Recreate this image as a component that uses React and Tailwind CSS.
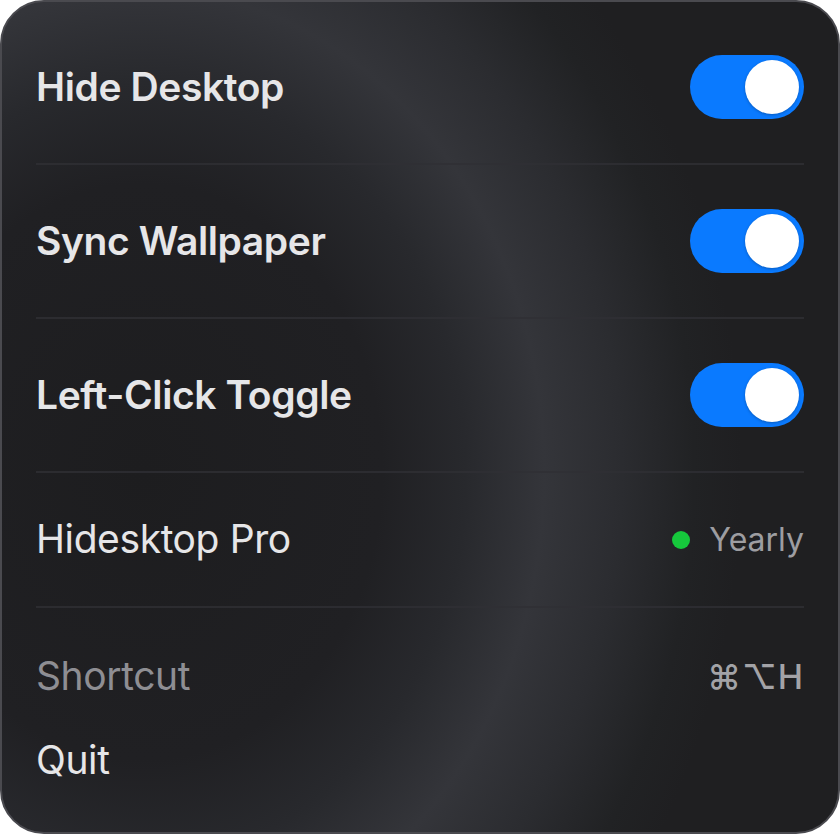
import React from "react";

function Toggle() {
  return (
    <div className="w-[114px] h-[64px] rounded-full bg-[#0a7aff] p-[5px] flex justify-end items-center">
      <div className="w-[54px] h-[54px] rounded-full bg-white shadow-[0_1px_3px_rgba(0,0,0,0.25)]" />
    </div>
  );
}

function Separator() {
  return <div className="h-[2px] bg-[#2f3035]/80" />;
}

export default function App() {
  const toggles = ["Hide Desktop", "Sync Wallpaper", "Left-Click Toggle"];

  return (
    <div className="w-[840px] h-[834px] bg-white font-['Inter','DejaVu_Sans',sans-serif]">
      <div className="w-full h-full rounded-[44px] border-2 border-[#4a4a4f] overflow-hidden bg-[#1f1f21] bg-[radial-gradient(ellipse_600px_720px_at_140px_470px,#1d1d1f_0%,#202023_40%,#28292d_54%,#34353a_67%,#2b2c30_80%,#212224_92%,#1f1f21_100%)] px-[34px] pt-[9px] flex flex-col">
        {toggles.map((label) => (
          <React.Fragment key={label}>
            <div className="h-[152px] flex items-center justify-between">
              <span className="text-[39px] font-semibold text-[#e6e6e8] tracking-[-0.4px]">
                {label}
              </span>
              <Toggle />
            </div>
            <Separator />
          </React.Fragment>
        ))}

        {/* Pro row */}
        <div className="h-[133px] flex items-center justify-between">
          <span className="text-[39px] font-normal text-[#e6e6e8] tracking-[-0.4px]">
            Hidesktop Pro
          </span>
          <div className="flex items-center gap-[19px]">
            <span className="w-[18px] h-[18px] rounded-full bg-[#16c83c]" />
            <span className="text-[32px] text-[#9d9da1]">Yearly</span>
          </div>
        </div>
        <Separator />

        <div className="pt-[26px]">
          <div className="h-[84px] flex items-center justify-between">
            <span className="text-[39px] text-[#8e8e93] tracking-[-0.4px]">Shortcut</span>
            <span className="text-[34px] font-medium text-[#a3a3a7] tracking-[1px]">⌘⌥H</span>
          </div>
          <div className="h-[84px] flex items-center">
            <span className="text-[39px] text-[#e6e6e8] tracking-[-0.4px]">Quit</span>
          </div>
        </div>
      </div>
    </div>
  );
}
